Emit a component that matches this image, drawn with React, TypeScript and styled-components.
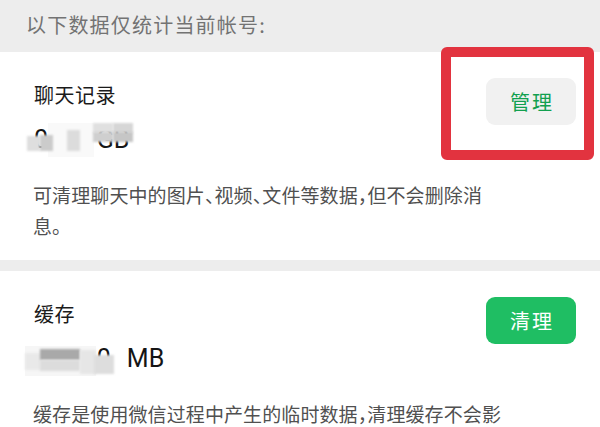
import React from "react";
import styled, { createGlobalStyle } from "styled-components";

const GlobalStyle = createGlobalStyle`
  html, body {
    margin: 0;
    padding: 0;
    background: #ededed;
  }
  body {
    width: 600px;
    height: 427px;
    overflow: hidden;
    font-family: "Noto Sans CJK SC", "Noto Sans", sans-serif;
  }
`;

const Page = styled.div`
  width: 600px;
  min-height: 427px;
  background: #ededed;
  display: flex;
  flex-direction: column;
`;

const Notice = styled.div`
  height: 52px;
  box-sizing: border-box;
  padding: 10px 0 0 26px;
  font-size: 20px;
  line-height: 30px;
  letter-spacing: 1.2px;
  color: #737373;
`;

const Card = styled.section<{ $gapBelow?: number }>`
  position: relative;
  background: #ffffff;
  padding: 26px 24px 19px 34px;
  margin-bottom: ${(p) => p.$gapBelow ?? 0}px;
  display: flex;
  flex-direction: column;
`;

const CardHead = styled.div`
  display: flex;
  align-items: flex-start;
  justify-content: space-between;
`;

const Info = styled.div`
  display: flex;
  flex-direction: column;
`;

const Title = styled.div`
  margin-top: 3px;
  font-size: 20px;
  line-height: 28px;
  letter-spacing: 0.5px;
  color: #1b1b1b;
`;

const SizeRow = styled.div`
  position: relative;
  margin-top: 14px;
  height: 34px;
  display: flex;
  align-items: baseline;
  font-family: Roboto, "Noto Sans", sans-serif;
  font-size: 25px;
  line-height: 34px;
  color: #151515;
`;

const SizeNumber = styled.span``;

const SizeUnit = styled.span<{ $gap: number }>`
  margin-left: ${(p) => p.$gap}px;
`;

const MosaicCell = styled.span<{
  $x: number;
  $y: number;
  $w: number;
  $h: number;
  $c: string;
  $soft: boolean;
}>`
  position: absolute;
  z-index: 1;
  left: ${(p) => p.$x}px;
  top: ${(p) => p.$y}px;
  width: ${(p) => p.$w}px;
  height: ${(p) => p.$h}px;
  background: ${(p) => p.$c};
  filter: ${(p) => (p.$soft ? "blur(0.8px)" : "none")};
`;

const ActionButton = styled.button<{ $variant: "primary" | "secondary" }>`
  flex: none;
  width: 90px;
  height: 47px;
  border: none;
  border-radius: 9px;
  padding: 0 0 0 2px;
  font-family: "Noto Sans CJK SC", "Noto Sans", sans-serif;
  font-size: 20px;
  letter-spacing: 2px;
  font-weight: 400;
  background: ${(p) => (p.$variant === "primary" ? "#1fbe63" : "#f1f1f1")};
  color: ${(p) => (p.$variant === "primary" ? "#ffffff" : "#12a04f")};
  cursor: pointer;
`;

const Desc = styled.p`
  margin: 22px 0 0 -1px;
  max-width: 471px;
  font-size: 19px;
  line-height: 31px;
  letter-spacing: 0.1px;
  font-feature-settings: "halt";
  color: #505050;
`;

const Annotation = styled.div`
  position: absolute;
  z-index: 2;
  top: -5px;
  right: 6px;
  width: 153px;
  height: 113px;
  box-sizing: border-box;
  border: 10px solid #e2333f;
  border-radius: 6px;
  pointer-events: none;
`;

type Cell = { x: number; y: number; w: number; h: number; c: string; soft?: boolean };

// mosaic cells, relative to the size row (row left = page x 34)
const chatMosaic: Cell[] = [
  { x: 14, y: 0, w: 46, h: 34, c: "#f9f9f9" },
  { x: -7, y: 13, w: 13, h: 15, c: "#dedede", soft: true },
  { x: 6, y: 12, w: 13, h: 16, c: "#cbcbcb", soft: true },
  { x: 33, y: 7, w: 13, h: 21, c: "#dcdcdc", soft: true },
  { x: 59, y: 0, w: 20, h: 10, c: "#e0e0e0", soft: true },
  { x: 79, y: 0, w: 20, h: 10, c: "#d6d6d6", soft: true },
  { x: 59, y: 9, w: 20, h: 10, c: "#cfcfcf", soft: true },
  { x: 79, y: 9, w: 20, h: 10, c: "#c6c6c6", soft: true },
];

const cacheMosaic: Cell[] = [
  { x: -9, y: 4, w: 71, h: 30, c: "#f6f6f6" },
  { x: -9, y: 11, w: 16, h: 17, c: "#e9e9e9", soft: true },
  { x: 6, y: 7, w: 40, h: 11, c: "#a9a9a9", soft: true },
  { x: 6, y: 18, w: 40, h: 11, c: "#dcdcdc", soft: true },
  { x: 46, y: 8, w: 16, h: 24, c: "#e6e6e6", soft: true },
  { x: 60, y: 13, w: 20, h: 19, c: "#dddddd", soft: true },
];

function Mosaic({ cells }: { cells: Cell[] }) {
  return (
    <>
      {cells.map((c, i) => (
        <MosaicCell
          key={i}
          $x={c.x}
          $y={c.y}
          $w={c.w}
          $h={c.h}
          $c={c.c}
          $soft={!!c.soft}
        />
      ))}
    </>
  );
}

export default function App() {
  return (
    <>
      <GlobalStyle />
      <Page>
        <Notice>以下数据仅统计当前帐号:</Notice>
        <Card $gapBelow={11}>
          <CardHead>
            <Info>
              <Title>聊天记录</Title>
              <SizeRow>
                <SizeNumber>0.00</SizeNumber>
                <SizeUnit $gap={14}>GB</SizeUnit>
                <Mosaic cells={chatMosaic} />
              </SizeRow>
            </Info>
            <ActionButton $variant="secondary">管理</ActionButton>
          </CardHead>
          <Desc>可清理聊天中的图片、视频、文件等数据，但不会删除消息。</Desc>
          <Annotation />
        </Card>
        <Card>
          <CardHead>
            <Info>
              <Title>缓存</Title>
              <SizeRow>
                <SizeNumber>1280.0</SizeNumber>
                <SizeUnit $gap={16}>MB</SizeUnit>
                <Mosaic cells={cacheMosaic} />
              </SizeRow>
            </Info>
            <ActionButton $variant="primary">清理</ActionButton>
          </CardHead>
          <Desc>缓存是使用微信过程中产生的临时数据，清理缓存不会影响微信的正常使用。</Desc>
        </Card>
      </Page>
    </>
  );
}
